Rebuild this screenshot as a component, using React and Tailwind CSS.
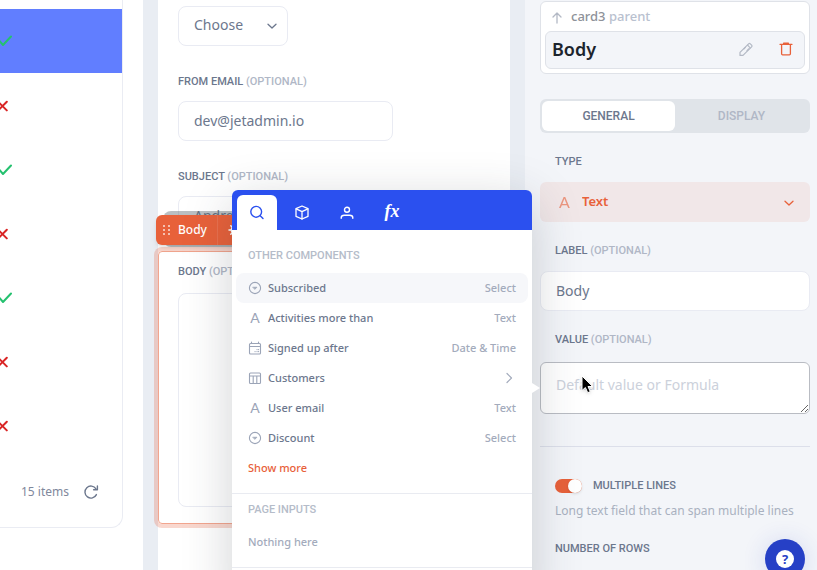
import React from "react";

const LINE = { fill: "none", stroke: "currentColor", strokeLinecap: "round", strokeLinejoin: "round" };

function CheckIcon() {
  return (
    <svg width="16" height="14" viewBox="0 0 16 14" className="text-[#25c16f]" {...LINE} strokeWidth="2">
      <path d="M3.5 7 7 11 15 2.5" />
    </svg>
  );
}

function CrossIcon() {
  return (
    <svg width="12" height="12" viewBox="0 0 12 12" className="text-[#d92525]" {...LINE} strokeWidth="2">
      <path d="M2.2 1.8l8.6 8.6M10.8 1.8l-8.6 8.6" />
    </svg>
  );
}

function RefreshIcon() {
  return (
    <svg width="16" height="16" viewBox="0 0 16 16" {...LINE} strokeWidth="1.4">
      <path d="M13.4 10.6A6 6 0 1 1 13 4.8" />
      <path d="M14.4 2v3.8h-3.8" />
    </svg>
  );
}

function ChevronDown({ className }) {
  return (
    <svg width="12" height="12" viewBox="0 0 12 12" className={className} {...LINE} strokeWidth="1.3">
      <path d="M2 4.2 6 8l4-3.8" />
    </svg>
  );
}

function SelectIcon() {
  return (
    <svg width="14" height="14" viewBox="0 0 14 14" {...LINE} strokeWidth="1.1">
      <circle cx="7" cy="7" r="5.6" />
      <path d="M5 6.2h4L7 8.2z" fill="currentColor" strokeWidth="0.6" />
    </svg>
  );
}

function LetterIcon() {
  return <span className="font-['Lato',sans-serif] text-sm leading-none font-normal">A</span>;
}

function CalendarIcon() {
  return (
    <svg width="14" height="14" viewBox="0 0 14 14" {...LINE} strokeWidth="1.1">
      <rect x="1.5" y="2.5" width="11" height="10.5" rx="1" />
      <path d="M1.5 5.5h11M3.5 1v1.5M10.5 1v1.5" />
      <path d="M9 8.6h.1M10.5 8.6h.1M7 10.6h.1M9 10.6h.1M10.5 10.6h.1" />
    </svg>
  );
}

function TableIcon() {
  return (
    <svg width="14" height="14" viewBox="0 0 14 14" {...LINE} strokeWidth="1.1">
      <rect x="1.5" y="2" width="11" height="10.5" rx="1" />
      <path d="M1.5 5h11M5.2 5v7.5M8.8 5v7.5" />
    </svg>
  );
}

function SearchIcon() {
  return (
    <svg width="16" height="16" viewBox="0 0 16 16" {...LINE} strokeWidth="1.4">
      <circle cx="7.2" cy="6.8" r="5.4" />
      <path d="M11.2 10.8 14 13.6" />
    </svg>
  );
}

function CubeIcon() {
  return (
    <svg width="16" height="16" viewBox="0 0 16 16" {...LINE} strokeWidth="1.3">
      <path d="M8 1 14 3.6v7.8L8 14 2 11.4V3.6z" />
      <path d="M2.2 3.9 8 6.6l5.8-2.7M8 6.6V14" />
    </svg>
  );
}

function PersonIcon() {
  return (
    <svg width="16" height="16" viewBox="0 0 16 16" {...LINE} strokeWidth="1.4">
      <circle cx="8" cy="4.8" r="2.5" />
      <path d="M2.2 13.2v-.4c0-1.6 1.4-2.6 3.2-2.6h5.2c1.8 0 3.2 1 3.2 2.6v.4" />
    </svg>
  );
}

function PencilIcon() {
  return (
    <svg width="16" height="16" viewBox="0 0 16 16" {...LINE} strokeWidth="1.2">
      <path d="M2 14.4v-3l8.6-8.6c.5-.5 1.2-.5 1.7 0l1.3 1.3c.5.5.5 1.2 0 1.7L5 14.4z" />
      <path d="M9.6 4.2 12.2 6.8M7.4 6.4 6 7.8M9 9.6l1.6-1.6" />
    </svg>
  );
}

function TrashIcon() {
  return (
    <svg width="14" height="16" viewBox="0 0 14 16" {...LINE} strokeWidth="1.3">
      <path d="M1 3.3h12M4.6 2.2h4.8M2.6 3.6v9.2c0 .6.4 1 1 1h6.8c.6 0 1-.4 1-1V3.6" />
    </svg>
  );
}

function GearIcon() {
  return (
    <svg width="14" height="14" viewBox="0 0 14 14" {...LINE} strokeWidth="1.5">
      <circle cx="7" cy="7" r="3.6" />
      <path d="M7 1v2M7 11v2M1 7h2M11 7h2M2.8 2.8l1.3 1.3M9.9 9.9l1.3 1.3M2.8 11.2l1.3-1.3M9.9 4.1l1.3-1.3" />
    </svg>
  );
}

function Optional() {
  return <span className="text-[#b0b7c6]"> (OPTIONAL)</span>;
}

const ROWS = [true, false, true, false, true, false, false];

function TablePane() {
  return (
    <section className="w-[143px] shrink-0 pr-5">
      <div className="rounded-br-xl border-r border-b border-[#eaecf3] pt-[9px]">
        <ul>
          {ROWS.map((ok, i) => (
            <li key={i} className={i === 0 ? "flex h-16 items-center bg-[#617eff]" : "flex h-16 items-center pt-0.5"}>
              <span className="-ml-1" role="img" aria-label={ok ? "Yes" : "No"}>
                {ok ? <CheckIcon /> : <CrossIcon />}
              </span>
            </li>
          ))}
        </ul>
        <div className="flex h-[70px] items-center justify-end gap-[14px] pr-[23px] text-[#6c778d]">
          <span className="text-xs text-[#7f889c]">15 items</span>
          <button type="button" aria-label="Refresh">
            <RefreshIcon />
          </button>
        </div>
      </div>
    </section>
  );
}

const CAPS = "font-['Roboto',sans-serif] text-[11px] leading-4 font-medium";
const LABEL = CAPS + " block text-[#6c778d]";
const FIELD = "block h-10 rounded-lg border border-[#e9ebf3] bg-white px-[15px] pb-0.5 text-sm text-[#6c778d] outline-none";

function FormPane() {
  return (
    <section className="min-w-0 flex-1 bg-[#e9edf3] px-[15px]">
      <form className="h-full bg-white px-5 pt-[6px]">
        <div className="relative w-[110px]">
          <select aria-label="Choose" className={FIELD + " w-full appearance-none"}>
            <option>Choose</option>
          </select>
          <ChevronDown className="pointer-events-none absolute top-[14px] right-[10px] text-[#6c778d]" />
        </div>
        <div className="mt-7">
          <label htmlFor="from" className={LABEL}>FROM EMAIL<Optional /></label>
          <input id="from" defaultValue="dev@jetadmin.io" className={FIELD + " mt-[11px] w-[215px]"} />
        </div>
        <div className="mt-7">
          <label htmlFor="subject" className={LABEL}>SUBJECT<Optional /></label>
          <input id="subject" defaultValue="Andrew" className={FIELD + " mt-[11px] w-[215px]"} />
        </div>
        <div className="relative -mx-5 mt-[15px] rounded-sm border border-[#f2a58e] px-[19px] pt-3 pb-4 ring-4 ring-[#e8613a]/25">
          <label htmlFor="body" className={LABEL}>BODY<Optional /></label>
          <textarea id="body" className="mt-[13px] block h-[214px] w-full resize-none rounded-lg border border-[#e9ebf3] outline-none" />
          <div className="absolute -top-[41px] left-1 h-9 w-40 rounded-lg bg-[#535f66]/40" />
          <div className="absolute -top-[37px] -left-[3px] flex h-[30px] w-40 items-center rounded-md bg-[#e8613a] text-white shadow-md">
            <svg width="8" height="12" viewBox="0 0 8 12" className="mx-[7px] opacity-60" fill="currentColor">
              <path d="M0 1h2v2H0zM5 1h2v2H5zM0 5h2v2H0zM5 5h2v2H5zM0 9h2v2H0zM5 9h2v2H5z" />
            </svg>
            <span className="w-[39px] text-xs font-medium">Body</span>
            <button type="button" aria-label="Settings" className="h-full border-l border-white/10 pl-[10px]">
              <GearIcon />
            </button>
          </div>
        </div>
      </form>
    </section>
  );
}

function PropertiesPane() {
  return (
    <aside className="w-[292px] shrink-0 bg-[#f3f5f9] pt-px pr-[7px] pl-[15px]">
      <div className="rounded-md border border-[#dfe2e8] bg-white p-1">
        <div className="flex h-[25px] items-center gap-2 pb-1 pl-1.5 text-[13px] font-medium text-[#8e9299]">
          <svg width="12" height="14" viewBox="0 0 12 14" className="text-[#b3b9c5]" {...LINE} strokeWidth="1.3">
            <path d="M6 13V3M2 7l4-4 4 4" />
          </svg>
          <span>card3 <span className="text-[#b9c1cf]">parent</span></span>
        </div>
        <div className="flex h-[38px] items-center rounded-md border border-[#dfe2e8] bg-[#f3f5f9] pr-[11px] pb-0.5 pl-1.5">
          <h2 className="flex-1 text-lg font-semibold text-[#1c242c]">Body</h2>
          <button type="button" aria-label="Rename" className="text-[#b3b9c5]"><PencilIcon /></button>
          <button type="button" aria-label="Delete" className="ml-[25px] text-[#e8613a]"><TrashIcon /></button>
        </div>
      </div>

      <div role="tablist" className="mt-[25px] flex h-[34px] rounded-md bg-[#e0e4e9] p-0.5 font-['Roboto',sans-serif] text-xs font-medium">
        <button role="tab" type="button" aria-selected="true" className="flex-1 rounded-md bg-white text-[#6c778d]">GENERAL</button>
        <button role="tab" type="button" aria-selected="false" className="flex-1 text-[#b0b7c6]">DISPLAY</button>
      </div>

      <label htmlFor="type" className={LABEL + " mt-[21px] pl-[15px]"}>TYPE</label>
      <div className="relative mt-3 text-[#e8613a]">
        <select id="type" className="block h-10 w-full appearance-none rounded-md bg-[#f1e7e8] pl-[42px] text-[13px] font-semibold outline-none">
          <option>Text</option>
        </select>
        <span className="pointer-events-none absolute top-[10px] left-[19px] font-['Lato',sans-serif] text-base leading-5 opacity-60">A</span>
        <ChevronDown className="pointer-events-none absolute top-[15px] right-[15px]" />
      </div>

      <label htmlFor="label" className={LABEL + " mt-[21px] pl-[15px]"}>LABEL<Optional /></label>
      <input id="label" defaultValue="Body" className={FIELD + " mt-3 w-full"} />

      <label htmlFor="value" className={LABEL + " mt-[21px] pl-[15px]"}>VALUE<Optional /></label>
      <textarea
        id="value"
        placeholder="Default value or Formula"
        className="mt-[14px] block h-[52px] w-full rounded-md border border-[#b9bcc3] bg-white px-[15px] py-3 text-sm leading-5 outline-none placeholder:text-[#ccd1db]"
      />

      <hr className="mt-8 border-[#dcdfea]" />

      <div className="mt-[31px] pl-[15px]">
        <label className={CAPS + " flex h-4 items-center gap-[11px] text-[#6c778d]"}>
          <input type="checkbox" role="switch" defaultChecked className="sr-only" />
          <span className="flex h-[14px] w-[27px] justify-end rounded-full bg-[#e8613a]">
            <span className="size-[14px] rounded-full bg-white shadow" />
          </span>
          MULTIPLE LINES
        </label>
        <p className="mt-2 text-xs leading-[18px] whitespace-nowrap text-[#a9b1c0]">Long text field that can span multiple lines</p>
        <p className={LABEL + " mt-[21px]"}>NUMBER OF ROWS</p>
      </div>
    </aside>
  );
}

const ITEMS = [
  ["Subscribed", "Select", SelectIcon],
  ["Activities more than", "Text", LetterIcon],
  ["Signed up after", "Date & Time", CalendarIcon],
  ["Customers", null, TableIcon],
  ["User email", "Text", LetterIcon],
  ["Discount", "Select", SelectIcon],
];

function TokenPopover() {
  return (
    <div className="absolute top-[190px] right-[285px] w-[300px] rounded-t-md bg-white text-[11px] font-medium shadow-[0_12px_50px_rgba(40,50,60,0.22)]">
      <div role="tablist" className="flex gap-[5px] rounded-t-md bg-[#2b50ef] px-[5px] pt-[5px] text-white">
        <button role="tab" type="button" aria-label="Search" aria-selected="true" className="flex h-[35px] w-10 items-center justify-center rounded-t-md bg-white text-[#2b50ef]"><SearchIcon /></button>
        <button role="tab" type="button" aria-label="Components" className="flex h-[35px] w-10 items-center justify-center"><CubeIcon /></button>
        <button role="tab" type="button" aria-label="User" className="flex h-[35px] w-10 items-center justify-center"><PersonIcon /></button>
        <button role="tab" type="button" aria-label="Formula" className="flex h-[35px] w-10 items-center justify-center pb-1 font-['Liberation_Serif',serif] text-lg leading-none font-bold italic">fx</button>
      </div>
      <h3 className={CAPS + " px-4 pt-[18px] pb-[9px] text-[#b5bcc9]"}>OTHER COMPONENTS</h3>
      <ul className="px-1">
        {ITEMS.map(([name, kind, Icon], i) => (
          <li key={name}>
            <button type="button" className={"flex h-[30px] w-full items-center rounded-lg px-3 text-left" + (i === 0 ? " bg-[#f6f7fa]" : "")}>
              <span className="flex w-[14px] justify-center text-[#9ba4b7]"><Icon /></span>
              <span className="ml-1.5 flex-1 text-[#6c778d]">{name}</span>
              {kind ? (
                <span className="text-[#a3abbc]">{kind}</span>
              ) : (
                <svg width="14" height="14" viewBox="0 0 14 14" className="text-[#a3abbc]" {...LINE} strokeWidth="1.2">
                  <path d="M5 2.5 9.5 7 5 11.5" />
                </svg>
              )}
            </button>
          </li>
        ))}
      </ul>
      <button type="button" className="block h-[30px] px-4 text-[#e8613a]">Show more</button>
      <div className="mt-[10px] border-t border-[#e9ebf1] px-4 pt-2">
        <h3 className={CAPS + " text-[#b5bcc9]"}>PAGE INPUTS</h3>
        <p className="mt-4 leading-4 text-[#a3abbc]">Nothing here</p>
      </div>
      <div className="mt-[17px] h-10 border-t border-[#e9ebf1]" />
      <svg width="8" height="14" viewBox="0 0 8 14" className="absolute top-[191px] left-full" fill="white">
        <path d="M0 2l8 5-8 5z" />
      </svg>
    </div>
  );
}

export default function App() {
  return (
    <main className="relative flex h-screen w-full overflow-hidden bg-white font-['Noto_Sans',sans-serif]">
      <TablePane />
      <FormPane />
      <PropertiesPane />
      <TokenPopover />
      <button
        type="button"
        aria-label="Help"
        className="absolute right-3 -bottom-[9px] flex size-10 items-center justify-center rounded-full bg-[#2640c6] shadow-[0_2px_24px_rgba(38,64,198,0.16)]"
      >
        <span className="flex size-[18px] items-center justify-center rounded-full bg-white text-[13px] leading-none font-bold text-[#2640c6]">?</span>
      </button>
      <svg width="14" height="20" viewBox="0 0 14 20" className="pointer-events-none absolute top-[375px] right-[222px] drop-shadow" fill="black" stroke="white">
        <path d="M1 1v14.5l3.4-3 2.3 5.2 2.6-1.1-2.3-5.1h4.6z" />
      </svg>
    </main>
  );
}
